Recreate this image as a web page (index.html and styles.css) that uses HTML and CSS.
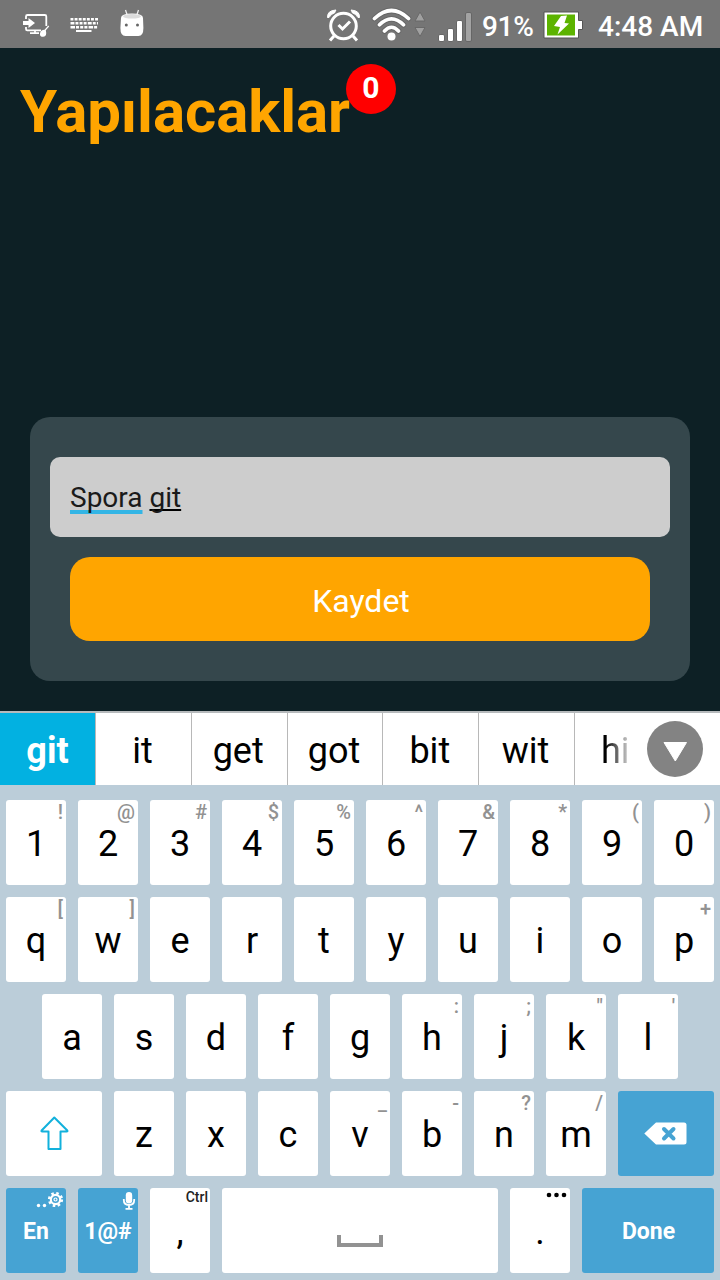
FILE: index.html
```html
<!DOCTYPE html>
<html lang="tr">
<head>
<meta charset="utf-8">
<title>Yapılacaklar</title>
<link rel="stylesheet" href="styles.css">
</head>
<body>
<div class="screen">
  <header class="status">
    <svg class="status-icons" width="160" height="48" viewBox="0 0 160 48">
      <g fill="none" stroke="#fff" stroke-width="1.8">
        <path d="M26 19v-2.500q0-1.500 1.500-1.500h17.300q1.500 0 1.500 1.500V26M26 27v2q0 1.300 1.300 1.300H41M35 30v3M30 33.200h9"/>
      </g>
      <g fill="#fff">
        <path d="M23 21h5.500v-3l6.500 5-6.500 5v-3H23z"/>
        <path d="M48.300 25.500l.9.900-3.400 3.900q1.600 6.500-2.600 6.500-3.700 0-3.200-3.400.6-3.400 4.500-3.600z"/>
      </g>
      <g stroke="#fff" stroke-width="2.400" fill="none">
        <path d="M70.500 19.200H98" stroke-dasharray="2.900 1.200"/>
        <path d="M70.500 23.200H98" stroke-dasharray="3.900 1.100 2.900 1.200 2.900 1.200 2.900 1.200"/>
        <path d="M70.500 27.300H98" stroke-dasharray="4.500 1 3 1.200 3 1.200 3 1.200"/>
        <path d="M76 31h15.500" stroke-width="2"/>
      </g>
      <path d="M125.500 10l2 6M138.500 10l-2 6" stroke="#eee" stroke-width="1.300"/>
      <path d="M121 18q0-4.500 11-4.500t11 4.500l.4 10q0 8-5 8h-13q-5 0-5-8z" fill="#fff"/>
      <ellipse cx="132" cy="16.300" rx="9" ry="2.300" fill="#dcdcdc"/>
      <circle cx="126.300" cy="25" r="1.500" fill="#666"/><circle cx="137.500" cy="25" r="1.500" fill="#666"/>
    </svg>
    <div class="status-right">
      <svg width="150" height="48" viewBox="324 0 150 48">
        <g fill="none" stroke="#fff" stroke-width="3">
          <circle cx="343.500" cy="26" r="12.800"/>
          <path d="M338.500 25l4 4 7.500-7.500M334 36l-4 4.500M353 36l4 4.500"/>
        </g>
        <path d="M327.500 17.500q-.5-7 8.500-7.500-1 1-1 2.500-4 1.500-6 5zM359.500 17.500q.5-7-8.500-7.500 1 1 1 2.500 4 1.500 6 5z" fill="#fff" stroke="#fff" stroke-width="1"/>
        <g fill="none" stroke="#666" stroke-width="5.500" stroke-linecap="round">
          <path d="M374.500 18.500Q391.500 2.500 408.500 18.500M379.500 24.800Q391.500 13 403.500 24.800M384.500 31Q391.500 23.500 398.500 31"/>
        </g>
        <g fill="none" stroke="#fff" stroke-width="3.700" stroke-linecap="round">
          <path d="M374.500 18.500Q391.500 2.500 408.500 18.500M379.500 24.800Q391.500 13 403.500 24.800M384.500 31Q391.500 23.500 398.500 31"/>
        </g>
        <circle cx="391.500" cy="36.500" r="4" fill="#fff"/>
        <path d="M420 12l5 9h-10zM420 36.500l5-9h-10z" fill="#a0a0a0" stroke="#696969"/>
        <g fill="#fff" stroke="#666">
          <rect x="438.500" y="34.500" width="6" height="7" rx="1.500"/>
          <rect x="447.500" y="28.500" width="6" height="13" rx="1.500"/>
          <rect x="456.500" y="20.500" width="6" height="21" rx="1.500"/>
          <rect x="465.500" y="12.500" width="6" height="29" rx="1.500" fill="#a3a3a3"/>
        </g>
      </svg>
      <span class="percent">91%</span>
      <svg width="40" height="48" viewBox="543 0 40 48">
        <path d="M544 12h34.500v8.500h4v9h-4V38H544z" fill="#fff" stroke="#555"/>
        <path d="M547 14.500h28v21h-28z" fill="#5cb300"/>
        <path d="M561 16l6-.5-2.500 7.500 4.500.5-11.500 11 2.500-7.500-6-1z" fill="#fff"/>
      </svg>
      <span class="clock">4:48 AM</span>
    </div>
  </header>

  <main class="app">
    <h1 class="title">Yapılacaklar<span class="badge">0</span></h1>
    <section class="dialog">
      <div class="field"><span class="composing">Spora</span> <span class="current">git</span></div>
      <div class="save">Kaydet</div>
    </section>
  </main>

  <section class="keyboard">
    <div class="suggestions">
      <span class="word active">git</span><span class="word">it</span><span class="word">get</span><span class="word">got</span><span class="word">bit</span><span class="word">wit</span><span class="word last"><span class="fade">hi</span></span>
      <span class="more"><svg width="56" height="56" viewBox="0 0 56 56"><circle cx="28" cy="28" r="28" fill="#838383"/><path d="M17 21.500h22.500L28.300 40z" fill="#fff" stroke="#fff" stroke-width="1" stroke-linejoin="round"/></svg></span>
    </div>
    <div class="keys">
      <div class="row">
        <div class="key">1<i class="hint">!</i></div><div class="key">2<i class="hint">@</i></div><div class="key">3<i class="hint">#</i></div><div class="key">4<i class="hint">$</i></div><div class="key">5<i class="hint">%</i></div><div class="key">6<i class="hint">^</i></div><div class="key">7<i class="hint">&amp;</i></div><div class="key">8<i class="hint">*</i></div><div class="key">9<i class="hint">(</i></div><div class="key">0<i class="hint">)</i></div>
      </div>
      <div class="row">
        <div class="key">q<i class="hint">[</i></div><div class="key">w<i class="hint">]</i></div><div class="key">e</div><div class="key">r</div><div class="key">t</div><div class="key">y</div><div class="key">u</div><div class="key">i</div><div class="key">o</div><div class="key">p<i class="hint">+</i></div>
      </div>
      <div class="row">
        <div class="key">a</div><div class="key">s</div><div class="key">d</div><div class="key">f</div><div class="key">g</div><div class="key">h<i class="hint">:</i></div><div class="key">j<i class="hint">;</i></div><div class="key">k<i class="hint">"</i></div><div class="key">l<i class="hint">'</i></div>
      </div>
      <div class="row">
        <div class="key wide"><svg width="96" height="85" viewBox="0 0 96 85"><path d="M48.300 26.500L61.300 39.500q.6 1-.6 1H54.500v17.500h-12V40.500h-6.300q-1.200 0-.6-1z" fill="none" stroke="#12b1dc" stroke-width="2" stroke-linejoin="round"/></svg></div>
        <div class="key">z</div><div class="key">x</div><div class="key">c</div><div class="key">v<i class="hint">_</i></div><div class="key">b<i class="hint">-</i></div><div class="key">n<i class="hint">?</i></div><div class="key">m<i class="hint">/</i></div>
        <div class="key wide blue"><svg width="96" height="85" viewBox="0 0 96 85"><path d="M26.300 42.500L38 31.500h28q2.500 0 2.500 2.500v17q0 2.500-2.500 2.500H38z" fill="#fff"/><path d="M46 38l9.500 9.500M55.500 38L46 47.500" stroke="#46a3d3" stroke-width="4" stroke-linecap="round"/></svg></div>
      </div>
      <div class="row">
        <div class="key blue">En<svg class="corner" width="32" height="24" viewBox="0 0 32 24"><circle cx="4.500" cy="17.500" r="1.700" fill="#fff"/><circle cx="10.500" cy="17.500" r="1.700" fill="#fff"/><g fill="none" stroke="#fff"><circle cx="21.500" cy="11.500" r="6.300" stroke-width="2.600" stroke-dasharray="2.474 2.474"/><circle cx="21.500" cy="11.500" r="4.700" stroke-width="2.200"/><circle cx="21.500" cy="11.500" r="1.500" stroke-width="1.200"/></g></svg></div>
        <div class="key blue">1@#<svg class="corner" width="18" height="24" viewBox="0 0 18 24"><rect x="5.800" y="4" width="6.400" height="11.500" rx="3.200" fill="#fff"/><path d="M3.800 11v1q0 5 5.200 5t5.200-5v-1M9 17v4M5.500 20.800h7" fill="none" stroke="#fff" stroke-width="1.800"/></svg></div>
        <div class="key">,<i class="hint ctrl">Ctrl</i></div>
        <div class="key space"><svg width="46" height="12" viewBox="0 0 46 12"><path d="M2 0v10h42V0" fill="none" stroke="#929292" stroke-width="4"/></svg></div>
        <div class="key">.<svg class="corner" width="26" height="14" viewBox="0 0 26 14"><circle cx="5" cy="7" r="2.300"/><circle cx="12.500" cy="7" r="2.300"/><circle cx="20" cy="7" r="2.300"/></svg></div>
        <div class="key done blue">Done</div>
      </div>
    </div>
  </section>
</div>
</body>
</html>
```
FILE: styles.css
```css
* { box-sizing: border-box; }
body { margin: 0; font-family: Roboto, "Noto Sans", sans-serif; }
svg { display: block; flex: none; }

.screen { width: 720px; height: 1280px; display: flex; flex-direction: column; overflow: hidden; background: #0d2025; }

.status { height: 48px; flex: none; display: flex; justify-content: space-between; background: #757575; color: #fff; font-size: 28px; font-weight: 500; line-height: 54px; }
.status-right { display: flex; padding-right: 16px; white-space: nowrap; }
.percent { width: 61px; padding-left: 8px; margin-right: 8px; letter-spacing: -0.3px; }
.clock { width: 106px; margin-left: 15px; }

.app { height: 663px; flex: none; display: flex; flex-direction: column; justify-content: space-between; align-items: flex-start; padding: 29px 30px 30px 20px; }
.title { position: relative; margin: 0; color: #ffa500; font-size: 60px; font-weight: 700; line-height: 70px; letter-spacing: -0.08px; }
.badge { position: absolute; right: -46px; top: -13px; width: 50px; height: 50px; border-radius: 50%; background: #f00; color: #fff; font-size: 30px; line-height: 48px; text-align: center; letter-spacing: 0; }

.dialog { width: 660px; height: 264px; margin-left: 10px; padding: 40px 20px; border-radius: 20px; background: #35474c; display: flex; flex-direction: column; gap: 20px; }
.field { height: 80px; padding-left: 20px; border-radius: 10px; background: #cdcdcd; color: #1a1a1a; font-size: 28px; line-height: 81px; }
.composing, .current { text-decoration: underline; text-decoration-skip-ink: none; }
.composing { text-decoration-color: #33b5e5; text-decoration-thickness: 4px; text-underline-offset: 3px; }
.current { text-decoration-color: #000; text-decoration-thickness: 2px; text-underline-offset: 2px; }
.save { height: 84px; margin: 0 20px; padding-left: 2px; border-radius: 20px; background: #ffa500; color: #fff; font-size: 32px; line-height: 88px; text-align: center; }

.keyboard { flex: 1; background: #bbcdd9; }
.suggestions { position: relative; height: 74px; display: flex; border-top: 2px solid #b6babc; background: #fff; font-size: 36px; line-height: 77px; }
.word { width: 95.800px; flex: none; text-align: center; border-left: 1px solid #b8b8b8; padding-right: 2px; }
.active { width: 95px; border-left: 0; padding-right: 0; background: #02b1e1; color: #fff; font-weight: 700; }
.last { width: 146px; padding-left: 26px; text-align: left; }
.fade { background: linear-gradient(90deg, #000 15%, #ddd 100%); background-clip: text; -webkit-background-clip: text; color: transparent; }
.more { position: absolute; right: 17px; top: 8px; }

.keys { display: flex; flex-direction: column; gap: 12px; padding-top: 15px; }
.row { display: flex; justify-content: center; gap: 12px; }
.key { position: relative; width: 60px; height: 85px; border-radius: 3px; background: #fff; color: #000; font-size: 36px; line-height: 89px; text-align: center; }
.wide { width: 96px; }
.space { width: 276px; padding: 47px 0 0 115px; }
.done { width: 132px; padding-left: 1px; }
.blue { background: #46a3d3; color: #fff; font-size: 23px; font-weight: 700; line-height: 87px; }
.hint { position: absolute; right: 3px; top: 0; color: #929292; font-size: 20px; font-style: normal; font-weight: 500; line-height: 25px; }
.ctrl { right: 2px; color: #222; font-size: 14px; line-height: 18px; }
.corner { position: absolute; right: 0; top: 0; }
```
